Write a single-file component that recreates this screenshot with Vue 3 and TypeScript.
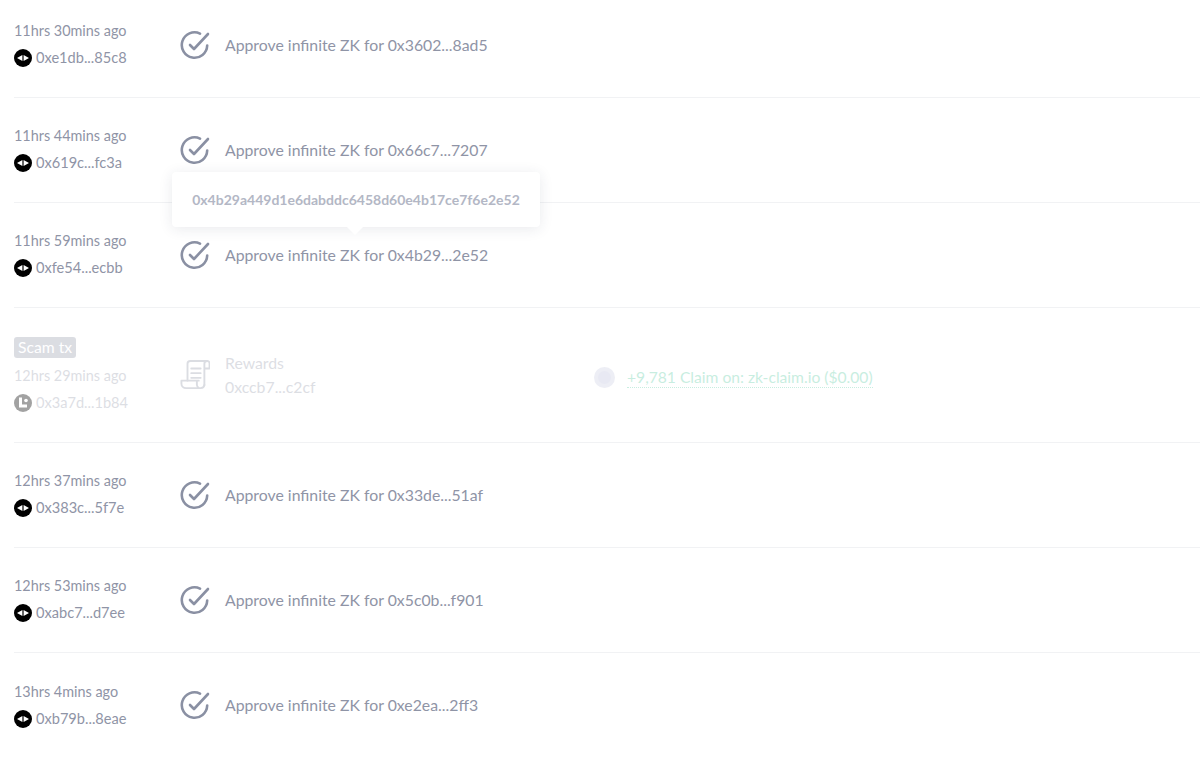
<script setup lang="ts">
interface Row {
  time: string
  addr: string
  target: string
  tooltip?: string
}

const topRows: Row[] = [
  { time: '11hrs 30mins ago', addr: '0xe1db...85c8', target: '0x3602...8ad5' },
  { time: '11hrs 44mins ago', addr: '0x619c...fc3a', target: '0x66c7...7207' },
  {
    time: '11hrs 59mins ago',
    addr: '0xfe54...ecbb',
    target: '0x4b29...2e52',
    tooltip: '0x4b29a449d1e6dabddc6458d60e4b17ce7f6e2e52'
  }
]

const bottomRows: Row[] = [
  { time: '12hrs 37mins ago', addr: '0x383c...5f7e', target: '0x33de...51af' },
  { time: '12hrs 53mins ago', addr: '0xabc7...d7ee', target: '0x5c0b...f901' },
  { time: '13hrs 4mins ago', addr: '0xb79b...8eae', target: '0xe2ea...2ff3' }
]
</script>

<template>
  <div class="list">
    <div v-for="row in topRows" :key="row.addr" class="row">
      <div class="when">
        <div class="time">{{ row.time }}</div>
        <div class="addr">
          <svg class="chain" viewBox="0 0 18 18">
            <circle cx="9" cy="9" r="9" fill="#000" />
            <path d="M8.400 6 3 9l5.400 3zM9.600 6 15 9l-5.400 3z" fill="#fff" />
          </svg>
          <span>{{ row.addr }}</span>
        </div>
      </div>
      <div class="action">
        <svg class="check" viewBox="0 0 30 30" fill="none" stroke="#8a90a3" stroke-width="2.6" stroke-linecap="round" stroke-linejoin="round">
          <path d="M27.200 15.500A12.700 12.700 0 1 1 20 3.600" />
          <path d="M10 15l4 4L28 4" />
        </svg>
        <div class="label">
          Approve infinite ZK for {{ row.target }}
          <div v-if="row.tooltip" class="tooltip">{{ row.tooltip }}</div>
        </div>
      </div>
    </div>

    <div class="row scam">
      <div class="when">
        <span class="tag">Scam tx</span>
        <div class="time">12hrs 29mins ago</div>
        <div class="addr">
          <svg class="chain" viewBox="0 0 18 18">
            <circle cx="9" cy="9" r="9" fill="#666" />
            <path d="M5 3.500h3V10.500h5V13.500H5z" fill="#fff" />
            <circle cx="12" cy="6.500" r="1.800" fill="#fff" />
          </svg>
          <span>0x3a7d...1b84</span>
        </div>
      </div>
      <div class="action">
        <svg class="check" viewBox="0 0 32 32" fill="none" stroke="#8a90a3" stroke-width="2" stroke-linecap="round" stroke-linejoin="round">
          <path d="M29 1H11a3 3 0 0 0-3 3v18" />
          <path d="M26 27V4a3 3 0 0 1 3-3 2.500 2.500 0 0 1 2.500 2.500V9H26" />
          <path d="M12 9h10M12 14h10M12 19h10" />
          <path d="M20 22H1.500v3a5 5 0 0 0 5 5H22a4 4 0 0 0 4-3.500M22 30a4 4 0 0 1-4-4v-4" />
        </svg>
        <div class="stack">
          <div class="label">Rewards</div>
          <div class="label">0xccb7...c2cf</div>
        </div>
      </div>
      <div class="claim">
        <span class="token"><i /></span>
        <span class="claim-text">+9,781 Claim on: zk-claim.io ($0.00)</span>
      </div>
    </div>

    <div v-for="row in bottomRows" :key="row.addr" class="row">
      <div class="when">
        <div class="time">{{ row.time }}</div>
        <div class="addr">
          <svg class="chain" viewBox="0 0 18 18">
            <circle cx="9" cy="9" r="9" fill="#000" />
            <path d="M8.400 6 3 9l5.400 3zM9.600 6 15 9l-5.400 3z" fill="#fff" />
          </svg>
          <span>{{ row.addr }}</span>
        </div>
      </div>
      <div class="action">
        <svg class="check" viewBox="0 0 30 30" fill="none" stroke="#8a90a3" stroke-width="2.6" stroke-linecap="round" stroke-linejoin="round">
          <path d="M27.200 15.500A12.700 12.700 0 1 1 20 3.600" />
          <path d="M10 15l4 4L28 4" />
        </svg>
        <div class="label">Approve infinite ZK for {{ row.target }}</div>
      </div>
    </div>
  </div>
</template>

<style>
html,
body {
  background: #fff;
  overflow: hidden;
}
</style>

<style scoped>
.list {
  margin-top: -7px;
  padding-left: 14px;
  font-family: Lato, "Open Sans", sans-serif;
  color: #8f94a6;
}

.row {
  display: flex;
  align-items: center;
  box-sizing: border-box;
  height: 105px;
  padding-bottom: 1px;
  border-bottom: 1px solid #f1f2f4;
}

.row:last-child {
  border-bottom: none;
}

.row.scam {
  height: 135px;
}

.scam .time,
.scam .addr span,
.scam .tag,
.scam .action,
.scam .claim {
  opacity: 0.3;
}

.scam .chain {
  opacity: 0.6;
}

.when {
  width: 166px;
  flex-shrink: 0;
}

.time {
  font-size: 14.4px;
  line-height: 20px;
  margin-bottom: 7px;
}

.addr {
  display: flex;
  align-items: center;
  gap: 4px;
  font-size: 14.600px;
  line-height: 20px;
}

.chain {
  width: 18px;
  height: 18px;
}

.tag {
  display: inline-block;
  padding: 0 4px;
  margin-bottom: 8px;
  background: #8a90a3;
  color: #fff;
  font-size: 15.700px;
  line-height: 21px;
  border-radius: 3px;
}

.action {
  width: 414px;
  flex-shrink: 0;
  display: flex;
  align-items: center;
  gap: 15px;
}

.check {
  width: 30px;
  height: 30px;
  flex-shrink: 0;
}

.label {
  position: relative;
  font-size: 15.800px;
  line-height: 24px;
}

.tooltip {
  position: absolute;
  left: -53px;
  bottom: 40px;
  width: 368px;
  height: 55px;
  box-sizing: border-box;
  background: #fff;
  border-radius: 4px;
  box-shadow: 0 2px 14px rgba(40, 50, 80, 0.1);
  color: #b3b7c5;
  font-size: 14px;
  font-weight: 700;
  line-height: 55px;
  text-align: center;
  white-space: nowrap;
}

.tooltip::after {
  content: "";
  position: absolute;
  left: 175px;
  bottom: -8px;
  border-left: 8px solid transparent;
  border-right: 8px solid transparent;
  border-top: 8px solid #fff;
}

.claim {
  display: flex;
  align-items: center;
  gap: 12px;
  margin-top: 6px;
}

.token {
  display: flex;
  align-items: center;
  justify-content: center;
  width: 21px;
  height: 21px;
  border-radius: 50%;
  background: #c5c8e0;
}

.token i {
  display: block;
  width: 13px;
  height: 13px;
  border-radius: 50%;
  background: #b4b8d8;
}

.claim-text {
  color: #4cc79a;
  font-size: 15.650px;
  line-height: 19px;
  border-bottom: 1px dotted #4cc79a;
}
</style>
